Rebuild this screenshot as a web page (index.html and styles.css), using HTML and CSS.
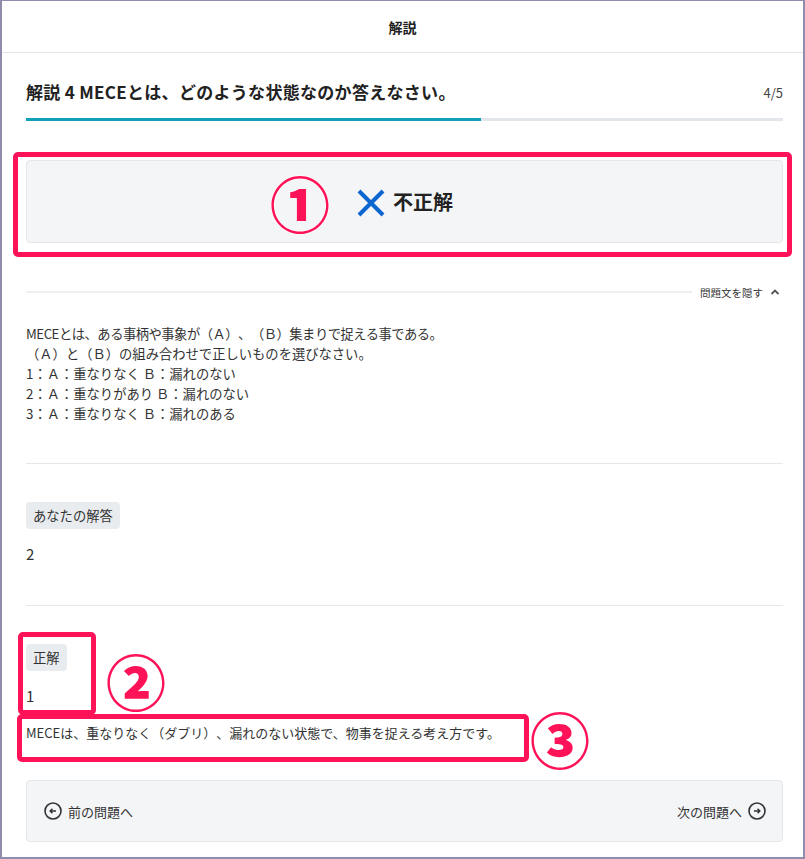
FILE: index.html
```html
<!DOCTYPE html>
<html lang="ja">
<head>
<meta charset="utf-8">
<title>解説</title>
<link rel="stylesheet" href="styles.css">
</head>
<body>
<div class="frame">
  <header class="topbar">解説</header>
  <main class="content">
    <div class="title-row">
      <h1 class="title">解説 4 MECEとは、どのような状態なのか答えなさい。</h1>
      <span class="count">4/5</span>
    </div>
    <div class="progress"><div class="progress-fill" style="width:60.1%"></div></div>

    <div class="result">
      <span class="note-box note-box-result"></span>
      <span class="note-num note-num-1">①</span>
      <svg class="cross" width="30" height="30" viewBox="0 0 30 30" aria-hidden="true">
        <path d="M3 3L27 27M27 3L3 27" stroke="#0b66d0" stroke-width="4" stroke-linecap="butt"/>
      </svg>
      <span class="result-label">不正解</span>
    </div>

    <div class="toggle-row">
      <span class="toggle-line"></span>
      <span class="toggle-text">問題文を隠す</span>
      <svg class="chevron" width="10" height="8" viewBox="0 0 10 8" aria-hidden="true">
        <path d="M1.5 6L5 2.5L8.5 6" fill="none" stroke="#555" stroke-width="1.8"/>
      </svg>
    </div>

    <div class="question">
      <p class="question-lead">MECEとは、ある事柄や事象が（Ａ）、（Ｂ）集まりで捉える事である。</p>
      <p>（Ａ）と（Ｂ）の組み合わせで正しいものを選びなさい。</p>
      <p>1：Ａ：重なりなく Ｂ：漏れのない</p>
      <p>2：Ａ：重なりがあり Ｂ：漏れのない</p>
      <p>3：Ａ：重なりなく Ｂ：漏れのある</p>
    </div>

    <section class="answer answer-yours">
      <span class="badge">あなたの解答</span>
      <p class="answer-value">2</p>
    </section>

    <section class="answer answer-correct">
      <div class="correct-block">
        <span class="note-box note-box-correct"></span>
        <span class="note-num note-num-2">②</span>
        <span class="badge">正解</span>
        <p class="answer-value">1</p>
      </div>
      <div class="explain">
        <span class="note-box note-box-explain"></span>
        <span class="note-num note-num-3">③</span>
        <p>MECEは、重なりなく（ダブリ）、漏れのない状態で、物事を捉える考え方です。</p>
      </div>
    </section>

    <nav class="pager">
      <a class="pager-link">
        <svg width="18" height="18" viewBox="0 0 18 18" aria-hidden="true">
          <circle cx="9" cy="9" r="8" fill="none" stroke="#333" stroke-width="1.6"/>
          <path d="M12 9H6.2M8.4 6.8L6.2 9L8.4 11.2" fill="none" stroke="#333" stroke-width="1.5"/>
        </svg>
        <span>前の問題へ</span>
      </a>
      <a class="pager-link">
        <span>次の問題へ</span>
        <svg width="18" height="18" viewBox="0 0 18 18" aria-hidden="true">
          <circle cx="9" cy="9" r="8" fill="none" stroke="#333" stroke-width="1.6"/>
          <path d="M6 9H11.8M9.6 6.8L11.8 9L9.6 11.2" fill="none" stroke="#333" stroke-width="1.5"/>
        </svg>
      </a>
    </nav>
  </main>
</div>
</body>
</html>
```

FILE: styles.css
```css
* { box-sizing: border-box; }

html, body {
  margin: 0;
  padding: 0;
  background: #fff;
}

body {
  font-family: "Noto Sans CJK JP", "Noto Sans", sans-serif;
  color: #333;
  text-spacing-trim: space-all;
}

.frame {
  width: 805px;
  height: 859px;
  border: 2px solid #8f8dab;
  border-top-width: 1px;
  overflow: hidden;
  background: #fff;
}

.topbar {
  height: 52px;
  border-bottom: 1px solid #e3e6ea;
  display: flex;
  align-items: center;
  justify-content: center;
  font-size: 14px;
  font-weight: 700;
  color: #222;
}

.content {
  padding: 0 20px 0 24px;
}

.title-row {
  display: flex;
  align-items: center;
  justify-content: space-between;
  margin-top: 27px;
  height: 24px;
}

.title {
  margin: 0;
  font-size: 17px;
  line-height: 24px;
  font-weight: 700;
  color: #222;
  letter-spacing: 0.3px;
}

.count {
  font-size: 13px;
  color: #444;
}

.progress {
  margin-top: 14px;
  height: 3px;
  background: #e3e6ea;
}

.progress-fill {
  height: 100%;
  background: #11a0b6;
}

/* result banner */
.result {
  position: relative;
  margin-top: 39px;
  height: 83px;
  background: #f4f5f7;
  border: 1px solid #e3e6ea;
  border-radius: 4px;
  display: flex;
  align-items: center;
  justify-content: center;
  gap: 7px;
}

.cross { display: block; margin-top: 2px; }

.result-label {
  font-size: 20px;
  font-weight: 700;
  color: #222;
}

/* call-out marks */
.note-box {
  position: absolute;
  border: 5px solid #fe1358;
  border-radius: 5px;
  pointer-events: none;
}

.note-num {
  position: absolute;
  color: #fe1358;
  font-size: 60px;
  line-height: 1;
  font-weight: 900;
  text-shadow: 0 0 2px #fff, 0 0 2px #fff;
}

.note-box-result { top: -9px; left: -14px; right: -10px; bottom: -15px; }
.note-num-1 { left: 243px; top: 50%; transform: translateY(-50%); }

/* question toggle */
.toggle-row {
  display: flex;
  align-items: center;
  margin-top: 40px;
  height: 18px;
}

.toggle-line {
  flex: 1;
  height: 2px;
  background: #eeeff1;
  margin-right: 8px;
}

.toggle-text {
  font-size: 10.5px;
  color: #333;
}

.chevron { margin-left: 7px; margin-right: 3px; }

.question {
  margin-top: 23px;
  padding-bottom: 39px;
  border-bottom: 1px solid #e6e7e9;
}

.question p {
  margin: 0;
  font-size: 13.3px;
  line-height: 20px;
  color: #333;
}

.question .question-lead { letter-spacing: -0.5px; }

/* answers */
.answer {
  padding-top: 38px;
}

.answer-yours {
  padding-bottom: 40px;
  border-bottom: 1px solid #e6e7e9;
}

.badge {
  display: inline-block;
  background: #e9ecef;
  border-radius: 4px;
  padding: 4px 7px;
  font-size: 13.3px;
  line-height: 19px;
  color: #333;
}

.answer-value {
  margin: 14px 0 0;
  font-size: 15px;
  line-height: 22px;
  color: #333;
}

.correct-block {
  position: relative;
  width: 60px;
}

.note-box-correct { top: -12px; left: -8px; right: -10px; bottom: -8px; }
.note-num-2 { left: 80px; top: 6px; }

.explain {
  position: relative;
  margin-top: 16px;
}

.explain p {
  margin: 0;
  font-size: 13px;
  line-height: 20px;
  color: #333;
}

.note-box-explain { top: -9px; left: -9px; width: 512px; bottom: -19px; }
.note-num-3 { left: 504px; top: -15px; }

/* pager */
.pager {
  margin-top: 37px;
  height: 62px;
  background: #f4f5f7;
  border: 1px solid #e3e6ea;
  border-radius: 4px;
  display: flex;
  align-items: center;
  justify-content: space-between;
  padding: 0 16px 0 17px;
}

.pager-link {
  display: flex;
  align-items: center;
  gap: 6px;
  font-size: 13px;
  color: #333;
}

.pager-link svg { display: block; }
```
